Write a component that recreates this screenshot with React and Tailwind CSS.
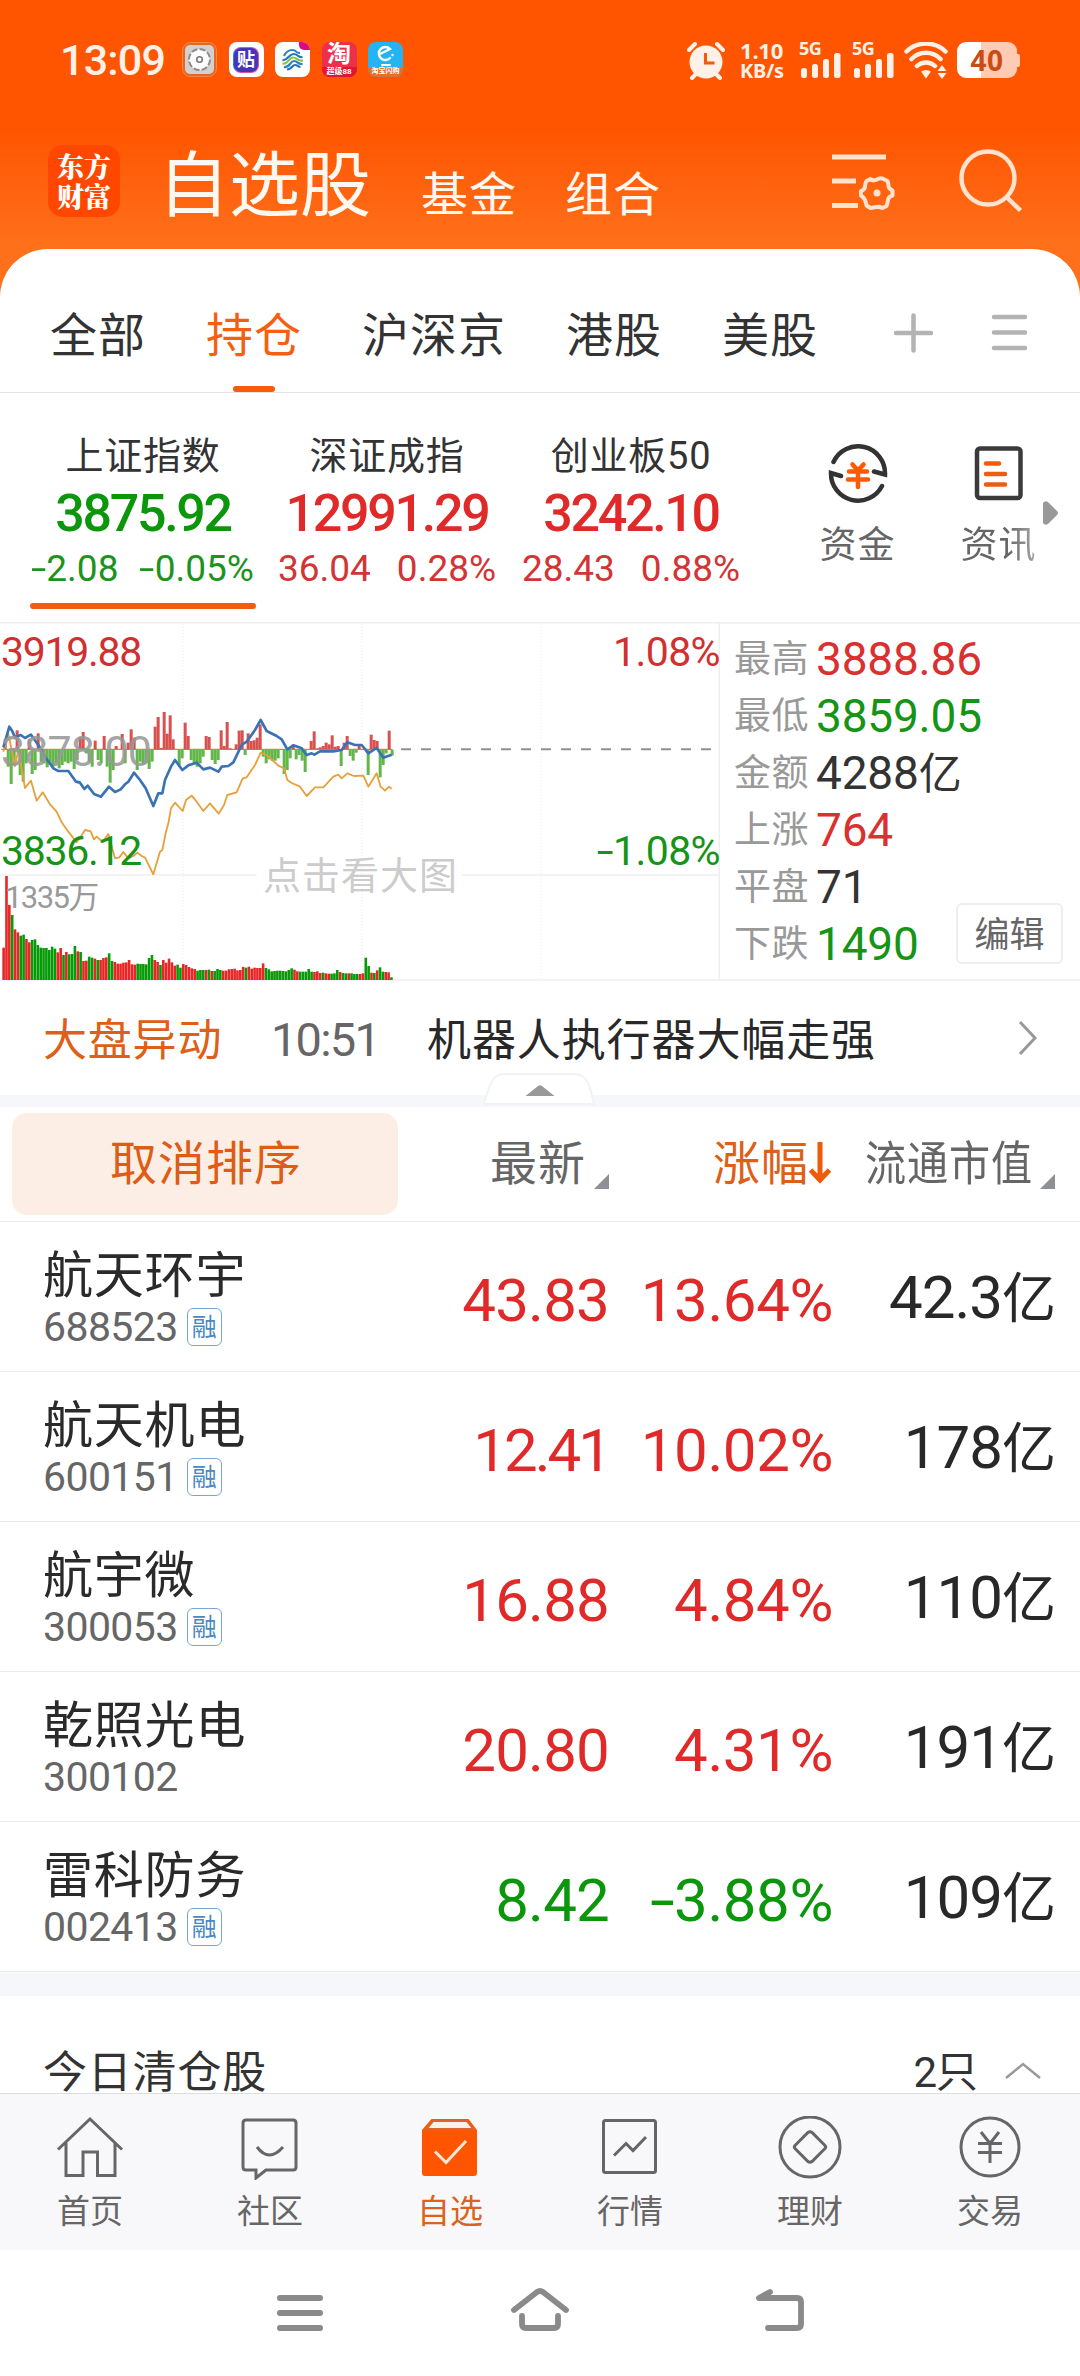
import { clsx } from "clsx";

const tabs = ["全部", "持仓", "沪深京", "港股", "美股"];

const indices = [
    { name: "上证指数", value: "3875.92", change: "-2.08", percent: "-0.05%", up: false, active: true },
    { name: "深证成指", value: "12991.29", change: "36.04", percent: "0.28%", up: true },
    { name: "创业板50", value: "3242.10", change: "28.43", percent: "0.88%", up: true },
];

const stats = [
    { label: "最高", value: "3888.86", color: "text-[#d93030]" },
    { label: "最低", value: "3859.05", color: "text-[#159415]" },
    { label: "金额", value: "4288亿", color: "text-[#333]" },
    { label: "上涨", value: "764", color: "text-[#d93030]" },
    { label: "平盘", value: "71", color: "text-[#333]" },
    { label: "下跌", value: "1490", color: "text-[#159415]" },
];

const stocks = [
    { name: "航天环宇", code: "688523", margin: true, price: "43.83", percent: "13.64%", cap: "42.3", up: true },
    { name: "航天机电", code: "600151", margin: true, price: "12.41", percent: "10.02%", cap: "178", up: true, tight: true },
    { name: "航宇微", code: "300053", margin: true, price: "16.88", percent: "4.84%", cap: "110", up: true },
    { name: "乾照光电", code: "300102", margin: false, price: "20.80", percent: "4.31%", cap: "191", up: true },
    { name: "雷科防务", code: "002413", margin: true, price: "8.42", percent: "-3.88%", cap: "109", up: false },
];

// [x, height], positive is above the zero line
const momentum = [
    [16, 30], [25, -50], [34, -102], [43, -45], [52, 57], [61, -75], [70, -95], [79, -40], [88, 30], [97, -72], [106, -60],
    [115, 48], [124, -35], [133, -40], [142, -52], [151, -45], [160, -50], [169, -40], [178, -55], [187, -45], [196, -35],
    [205, -40], [214, -35], [223, -57], [232, -30], [241, 38], [250, 52], [259, -10], [268, -35], [277, -50], [286, 26],
    [295, -30], [304, -40], [313, 40], [322, -50], [331, -98], [340, -60], [349, 10], [367, 46], [376, -40], [385, 20],
    [394, 60], [403, 35], [412, -60], [421, -35], [430, -45], [439, -40], [448, -57], [457, -35], [466, 68], [475, 97],
    [484, 4], [493, 112], [502, 47], [511, 102], [520, 30], [538, -45], [547, -25], [556, 80], [565, 40], [574, -30],
    [583, -40], [592, -50], [601, -40], [610, -20], [619, 40], [628, 37], [637, -30], [646, -42], [655, -30], [664, 57],
    [673, 10], [682, 82], [691, 3], [709, 15], [718, 56], [727, 57], [736, -15], [745, 48], [754, 25], [763, 27],
    [772, 35], [781, 75], [790, -20], [799, -40], [808, -28], [817, -32], [826, -32], [835, -25], [853, -72], [862, -60],
    [871, -25], [880, 14], [889, -28], [898, -15], [907, -32], [916, -66], [934, 25], [943, 54], [952, 3], [961, 6],
    [970, 10], [979, 20], [988, 15], [997, 42], [1006, 8], [1015, 10], [1024, -48], [1033, 20], [1042, 40], [1051, -18],
    [1060, -32], [1069, -8], [1078, 15], [1105, -75], [1114, 44], [1123, 28], [1132, 25], [1141, -82], [1150, -45],
    [1159, -10], [1168, 56], [1177, -17],
];

const volume = (
    "r97 r312 r225 g195 r152 r143 g133 g136 r123 r113 g120 g122 g105 g97 g96 g96 g90 g100 g94 r83 r96 g75 r84 g77 g78 g102 r86 g84 r57 r58 g70 g67 r64 g60 r60 r66 r68 g80 " +
    "g57 r54 r49 r49 r52 r53 r60 r47 r46 g49 g48 g48 g47 g66 g75 r60 r54 g45 r60 r52 r64 r53 r43 g46 g37 r48 r45 r39 r35 r33 g28 g30 g30 r30 g31 " +
    "r27 g27 g33 g30 r28 r28 r32 r33 r34 r29 r30 r39 g37 r40 r34 r37 r36 r36 r50 g36 g32 g26 g27 g28 g28 g27 g26 g30 g35 r31 r26 " +
    "g25 g25 g25 g33 g25 r24 r26 r21 g22 r20 r19 g19 g20 g30 r24 g21 g20 r20 g20 g18 g18 r18 r20 g67 g42 r22 g21 r29 g38 g25 r24 r23 g8"
).split(" ");

const volumeStep = 1172 / volume.length;

const avgLine =
    "10,412 28,350 36,362 45,382 62,375 75,384 93,374 115,405 135,440 160,475 175,483 205,483 228,515 240,518 253,537 263,527 282,552 303,560 327,530 345,546 362,538 375,523 385,515 402,488 420,510 437,535 460,588 475,550 487,550 495,510 513,470 525,450 547,480 565,466 590,458 610,478 630,473 655,485 665,470 685,468 700,457 725,405 740,395 765,360 782,330 800,363 830,378 845,388 862,418 880,406 905,415 920,435 935,430 943,434 960,424 1000,424 1025,420 1042,397 1065,405 1085,405 1105,430 1130,414 1150,443 1175,434";
const priceLine =
    "10,425 25,372 45,468 55,420 75,534 93,512 110,572 128,547 150,583 170,605 185,637 205,665 230,697 242,680 255,660 272,664 282,688 290,680 308,696 325,672 345,745 358,742 370,726 385,745 400,738 412,728 425,738 435,743 460,793 480,725 487,720 498,665 505,640 513,595 525,578 548,603 558,570 575,557 590,575 610,603 630,580 656,611 672,585 682,555 710,547 728,505 740,502 765,465 782,428 800,435 835,467 852,475 862,510 875,519 900,530 920,558 945,532 970,532 1000,500 1015,494 1025,505 1042,490 1062,498 1090,497 1105,530 1130,490 1142,530 1155,542 1167,530 1175,536";

const upColor = "text-[#e02a2a]";
const downColor = "text-[#0b960b]";

// Signed number with a wider minus sign than the font's own hyphen
const Signed = ({ value }) =>
    value.startsWith("-") ? (
        <>
            <span className="inline-block origin-right scale-x-[1.5]">-</span>
            {value.slice(1)}
        </>
    ) : (
        value
    );

const SignalBars = () => (
    <div className="flex h-[36px] w-[43px] flex-col">
        <span className="h-[13px] font-['Noto_Sans'] text-[18px] leading-[13px] font-bold tracking-[-0.5px]">5G</span>
        <svg width="43" height="26" className="-mt-[3px]" fill="currentColor">
            <rect x="2" y="16" width="6" height="10" rx="2.5" />
            <rect x="13" y="12" width="6" height="14" rx="2.5" />
            <rect x="24" y="7" width="6" height="19" rx="2.5" />
            <rect x="35" y="1" width="6.5" height="25" rx="2.5" />
        </svg>
    </div>
);

const AppIcons = () => (
    <div className="ml-[18px] flex gap-[11.5px]">
        <svg width="35" height="35" viewBox="0 0 35 35">
            <rect x="0.5" y="0.5" width="34" height="34" rx="8" fill="#e8661f" stroke="#f28a4c" />
            <rect x="3" y="3" width="29" height="29" rx="5" fill="#d3d1d0" />
            <circle cx="17.5" cy="17.5" r="10.5" fill="#fff" stroke="#8c8c8c" strokeWidth="2" strokeDasharray="6 2.2" />
            <circle cx="17.5" cy="17.5" r="2.8" fill="none" stroke="#777" strokeWidth="1.6" />
        </svg>
        <div className="flex size-[35px] items-center justify-center rounded-[8px] bg-white">
            <div className="flex size-[26px] items-center justify-center rounded-[8px] border border-[#e052a8] border-l-[#3a7bff] bg-[#4536b4] text-[18px] leading-none font-bold text-white">贴</div>
        </div>
        <svg width="35" height="35" viewBox="0 0 35 35">
            <rect width="35" height="35" rx="8" fill="#fff" />
            <path d="M24 0h3a8 8 0 0 1 8 8h-6a5 5 0 0 1-5-5z" fill="#e0087c" />
            <g fill="none" strokeWidth="2.2">
                <path d="M9 14q3-6 8-6 3 0 4 1.500t4 1.500" stroke="#2a84c6" />
                <path d="M7.500 18c5 1 6-6 11-6s4 4 9 3" stroke="#1f78bd" />
                <path d="M7.500 21.500c6 1 6-6 10.500-6s4 4 10 3" stroke="#8cc63f" />
                <path d="M9 25c6 1 6-6 10-6s3 3.500 8.500 3" stroke="#2a84c6" />
                <path d="M12 27.500c5 0 5-4.500 8-4.500s3 2 5.500 2" stroke="#1f78bd" />
            </g>
        </svg>
        <div className="flex size-[35px] flex-col items-center overflow-hidden rounded-[8px] bg-[#ee2f4c] text-white">
            <span className="h-[25px] text-[24px] leading-[25px] font-bold">淘</span>
            <span className="h-[10px] w-full bg-[#e3142f] text-center text-[8px] leading-[9px] font-bold">超级88</span>
        </div>
        <div className="flex size-[35px] flex-col items-center overflow-hidden rounded-[8px] bg-[#25b4f2] text-white">
            <svg width="35" height="25" viewBox="0 0 35 25" fill="none" stroke="#fff" strokeWidth="2.4" strokeLinecap="round">
                <path d="M12 12l10-5a6.500 6.500 0 1 0 0 9M24.500 13v.1" />
                <path d="M14 23h8" strokeWidth="2" />
            </svg>
            <span className="h-[10px] w-full bg-[#e2702f] text-center text-[7px] leading-[9px] font-bold">淘宝闪购</span>
        </div>
    </div>
);

const StatusBar = () => (
    <div className="flex h-[120px] items-start pt-[42px] pr-[60px] pl-[60px] text-[#fff0e8]">
        <span className="w-[104px] text-[43px] leading-[36px] font-medium tracking-[-0.8px]">13:09</span>
        <AppIcons />
        <div className="ml-auto flex items-start">
            <svg width="38" height="38" viewBox="0 0 38 38" fill="currentColor">
                <circle cx="19" cy="20" r="16.500" />
                <path d="M2 8l6-6M36 8l-6-6M9 32l-4 4M29 32l4 4" stroke="currentColor" strokeWidth="4" strokeLinecap="round" />
                <path d="M18.500 11v10h9" fill="none" stroke="#f2590c" strokeWidth="3" />
            </svg>
            <div className="ml-[15px] flex w-[44px] flex-col font-['Noto_Sans'] text-[22px] font-bold">
                <span className="h-[18px] leading-[17px] tracking-[-0.2px]">1.10</span>
                <span className="h-[18px] text-[20px] leading-[21px] tracking-[-0.3px]">KB/s</span>
            </div>
            <div className="ml-[15px] flex gap-[10px]">
                <SignalBars />
                <SignalBars />
            </div>
            <svg width="44" height="37" viewBox="0 0 44 37" className="ml-[9px]" fill="none" stroke="currentColor" strokeWidth="4.500" strokeLinecap="round">
                <path d="M2.500 9.500a28 28 0 0 1 39 0M7.500 17a20 20 0 0 1 29 0M13 24a13 13 0 0 1 18 0" />
                <path d="M17 29.500q5-3 10 0l-5 7z" fill="currentColor" stroke="none" />
                <path d="M33.500 29l4.500-6 4.500 6zM33.500 31l4.500 6 4.500-6z" fill="currentColor" stroke="none" />
            </svg>
            <div className="ml-[9px] flex items-center">
                <div className="flex h-[36px] w-[60px] items-center justify-center rounded-[9px] bg-linear-to-r from-white from-40% to-[#ffcbb3] to-40% font-['Noto_Sans'] text-[28px] leading-none font-bold tracking-[0.5px] text-[#cb4b14]">40</div>
                <span className="h-[13px] w-[3px] rounded-r-[2px] bg-[#ffcbb3]"></span>
            </div>
        </div>
    </div>
);

const Header = () => (
    <div className="flex h-[129px] items-start text-[#fff8f0]">
        <div className="mt-[25px] ml-[48px] flex size-[72px] flex-col items-center justify-center rounded-[15px] bg-[#ff4700] font-['Noto_Serif_CJK_SC','Noto_Sans_CJK_SC',serif] text-[27px] leading-[30px] font-black text-white">
            <span>东方</span>
            <span>财富</span>
        </div>
        <span className="mt-[26px] ml-[38px] w-[221px] text-[71px] leading-[80px] whitespace-nowrap">自选股</span>
        <span className="mt-[45px] ml-[42px] w-[102px] text-[47px] leading-[60px] tracking-[1px]">基金</span>
        <span className="mt-[45px] ml-[42px] w-[102px] text-[47px] leading-[60px] tracking-[1px]">组合</span>
        <svg width="64" height="60" viewBox="0 0 64 60" className="mt-[31px] ml-[165px]" fill="none" stroke="#ffe3cf" strokeWidth="5">
            <path d="M0 6h54M0 30h24M0 54.500h26" />
            <g strokeWidth="4" strokeLinejoin="round">
                <path d="M38.500 28q2.500 2.500 6.500.5t6.500-.5l4 2q1 2.500 1 5t4 4.500v5q-4 1-4.500 4.500t-1.500 6l-4 2q-3-1.500-6-1t-6 1l-4-2.500q-.5-3-1.500-5.500t-4-4.500v-4.500q4-1.500 4-4.500t1.500-5.500z" />
                <circle cx="45" cy="42" r="3.500" fill="#ffe3cf" stroke="none" />
            </g>
        </svg>
        <svg width="66" height="66" viewBox="0 0 66 66" className="mt-[27px] ml-[62px]" fill="none" stroke="#ffe3cf" strokeWidth="4.500">
            <circle cx="30" cy="31" r="26.500" />
            <path d="M48.500 50l14 13.500" />
        </svg>
    </div>
);

const Tabs = () => (
    <div className="flex h-[144px] items-start border-b border-[#e4e4e4] pl-[50px]">
        <div className="flex gap-[60px]">
            {tabs.map((tab) => (
                <div key={tab} className={clsx("flex flex-col items-center", tab === "持仓" ? "text-[#f55f12]" : "text-[#333]")}>
                    <span className="mt-[57px] text-[47px] leading-[60px] tracking-[1px] whitespace-nowrap">{tab}</span>
                    {tab === "持仓" && <span className="mt-[20px] h-[6px] w-[42px] rounded-full bg-[#fa5a0a]"></span>}
                </div>
            ))}
        </div>
        <svg width="40" height="40" viewBox="0 0 40 40" className="mt-[64px] ml-[75px]" stroke="#b3b3b3" strokeWidth="4.500" strokeLinecap="round">
            <path d="M3 20h35M20.500 2.500v35" />
        </svg>
        <svg width="38" height="40" viewBox="0 0 38 40" className="mt-[64px] ml-[58px]" stroke="#b3b3b3" strokeWidth="4.500" strokeLinecap="round">
            <path d="M3 4h31M3 19.500h31M3 35h31" />
        </svg>
    </div>
);

const IndexBar = () => (
    <div className="flex h-[229px] pl-[21px]">
        {indices.map((item) => (
            <div key={item.name} className="flex w-[244px] shrink-0 flex-col items-center pt-[38px]">
                <span className="text-[38px] leading-[50px] tracking-[0.8px] text-[#333]">{item.name}</span>
                <span className={clsx("mt-[7px] text-[52px] leading-[52px] font-medium tracking-[-2.3px]", item.up ? upColor : downColor)}>{item.value}</span>
                <div className={clsx("mt-[9px] flex gap-[26px] text-[37px] leading-[40px] whitespace-nowrap", item.up ? "text-[#d13535]" : "pl-[4px] text-[#1c931c]")}>
                    <span><Signed value={item.change} /></span>
                    <span><Signed value={item.percent} /></span>
                </div>
                {item.active && <span className="mt-[14px] h-[6px] w-[226px] rounded-full bg-[#f05c10]"></span>}
            </div>
        ))}
        <div className="ml-[34px] flex w-[141px] shrink-0 flex-col items-center pt-[51px] text-[#666]">
            <svg width="60" height="60" viewBox="0 0 60 60" fill="none" stroke="#333" strokeWidth="4.500" strokeLinecap="round">
                <path d="M5.500 18A27 27 0 0 1 57 30.500l-11-3" />
                <path d="M54 42A27 27 0 0 1 3 29l10 3" />
                <path d="M24.500 20.500l5.500 6 5.500-6M21 27.500h18M20 35.500h20M30 27v16" stroke="#ff5a00" />
            </svg>
            <span className="mt-[17px] text-[37px] leading-[50px] tracking-[1px]">资金</span>
        </div>
        <div className="flex w-[141px] shrink-0 flex-col items-center pt-[51px] text-[#777]">
            <svg width="60" height="60" viewBox="0 0 60 60" fill="none" stroke="#3a3a3a" strokeWidth="4.500" strokeLinecap="round">
                <rect x="8" y="4.500" width="43.500" height="49.500" rx="3" />
                <path d="M17 19.500h13M17 30h19M17 40.500h19" stroke="#ee5c12" />
            </svg>
            <span className="mt-[17px] bg-linear-to-r from-[#666] from-60% to-[#aaa] bg-clip-text text-[37px] leading-[50px] tracking-[1px] text-transparent">资讯</span>
        </div>
        <svg width="16" height="26" viewBox="0 0 16 26" className="mt-[107px] -ml-[26px] shrink-0">
            <path d="M0 3q2-3 5-1l9 9q2 2 0 4l-9 9q-3 2-5-1z" fill="#999" />
        </svg>
    </div>
);

const IntradayChart = () => (
    <div className="relative h-[359px] w-[720px] text-[41px] leading-[40px] tracking-[-1.3px]">
        <svg width="720" height="359" viewBox="0 36 2160 1077">
            <path d="M0 38h2160M0 795h770M1385 795h775M0 1110h2160M2158 38v1075" stroke="#efefef" strokeWidth="5" />
            <path d="M549 42v1068M1086 42v1068M1623 42v1068" stroke="#ececec" strokeWidth="3" strokeDasharray="3 6" />
            <path d="M1203 418h940" stroke="#909090" strokeWidth="6" strokeDasharray="30 30" />
            <path d="M4 418h1174" stroke="#b98f5c" strokeWidth="4" />
            {momentum.map(([x, h]) => (
                <rect key={x} x={x - 5} y={h > 0 ? 418 - h : 420} width="9" height={Math.abs(h)} fill={h > 0 ? "#d8504f" : "#62b64a"} />
            ))}
            {volume.map((v, i) => {
                const h = Number(v.slice(1));
                return <rect key={i} x={7 + i * volumeStep} y={1110 - h} width="7.800" height={h} fill={v[0] === "r" ? "#e82626" : "#069a06"} />;
            })}
        </svg>
        <svg width="720" height="359" viewBox="0 36 2160 1077" className="absolute top-0 left-0" fill="none" strokeLinejoin="round">
            <polyline points={priceLine} stroke="#e6a13c" strokeWidth="5.500" />
            <polyline points={avgLine} stroke="#3a72b5" strokeWidth="8" />
        </svg>
        <span className="absolute top-[109px] left-px text-[43px] tracking-[-0.9px] text-[#999]/90">3878.00</span>
        <span className="absolute top-[10px] left-px text-[#d13030]">3919.88</span>
        <span className="absolute top-[209px] left-px text-[#159415]">3836.12</span>
        <span className="absolute top-[10px] right-0 tracking-[-0.6px] text-[#d13030]">1.08%</span>
        <span className="absolute top-[209px] right-0 tracking-[-0.6px] text-[#159415]"><Signed value="-1.08%" /></span>
        <span className="absolute top-[234px] left-[263px] text-[38px] tracking-[1px] whitespace-nowrap text-[#ccc]">点击看大图</span>
        <span className="absolute top-[256px] left-[5px] text-[31px] tracking-[-1.6px] text-[#999]">1335万</span>
    </div>
);

const StatsPanel = () => (
    <div className="relative flex flex-1 flex-col border-t-2 border-b-2 border-[#f2f2f2] pt-[6px] pl-[14px]">
        {stats.map((s) => (
            <div key={s.label} className="flex h-[57px] shrink-0 items-center">
                <span className="w-[82px] pt-[2px] text-[37px] leading-none tracking-[0.5px] text-[#999]">{s.label}</span>
                <span className={clsx("text-[46px] leading-none tracking-[-0.2px]", s.color)}>
                    {s.value.replace("亿", "")}
                    {s.value.includes("亿") && <span className="text-[43px]">亿</span>}
                </span>
            </div>
        ))}
        <button className="absolute right-[17px] bottom-[15px] h-[61px] w-[107px] rounded-[6px] border-2 border-[#eee] bg-white pt-[3px] text-[35px] leading-none text-[#666]">编辑</button>
    </div>
);

const NewsRow = () => (
    <div className="relative flex h-[114px] shrink-0 items-center pl-[43px]">
        <span className="w-[228px] pt-[5px] text-[44px] leading-none tracking-[0.8px] text-[#dd5f18]">大盘异动</span>
        <span className="w-[156px] pt-[3px] text-[47px] leading-none tracking-[-1.8px] text-[#666]">10:51</span>
        <span className="pt-[5px] text-[44px] leading-none tracking-[0.9px] text-[#282828]">机器人执行器大幅走强</span>
        <svg width="20" height="36" viewBox="0 0 20 36" className="mr-[42px] ml-auto" fill="none" stroke="#999" strokeWidth="3">
            <path d="M2 2l15 16L2 34" />
        </svg>
        <svg width="114" height="34" viewBox="0 0 114 34" className="absolute top-[91px] left-[483px] z-10">
            <path d="M1 32q4-14 7-21 4-9 13-9h70q10 0 14 9 3 7 6 21z" fill="#fff" stroke="#f1f2f4" strokeWidth="2" />
            <path d="M42.500 24L55 14q2-1.500 4 0l12.500 10z" fill="#999" />
        </svg>
    </div>
);

const Corner = () => (
    <svg width="15" height="15" viewBox="0 0 15 15" className="mt-[67px] shrink-0">
        <path d="M15 0v15H0z" fill="#8f8f96" />
    </svg>
);

const TableHeader = () => (
    <div className="flex h-[115px] shrink-0 border-b border-[#ebebeb] text-[47px] leading-[60px] tracking-[1px] whitespace-nowrap text-[#666]">
        <div className="mt-[6px] ml-[12px] flex h-[102px] w-[386px] shrink-0 justify-center rounded-[15px] bg-[#fdeee5] pt-[21px] pl-[2px] text-[#de5c14]">取消排序</div>
        <span className="mt-[27px] ml-[92px] w-[104px]">最新</span>
        <Corner />
        <span className="mt-[27px] ml-[104px] w-[96px] text-[#dd5f18]">涨幅</span>
        <svg width="22" height="42" viewBox="0 0 22 42" className="mt-[35px] shrink-0" fill="none" stroke="#ee5a08" strokeWidth="5">
            <path d="M11 0v36M1.500 28l9.500 10 9.500-10" />
        </svg>
        <span className="mt-[27px] ml-[34px] w-[175px] origin-left scale-x-[0.875]">流通市值</span>
        <Corner />
    </div>
);

const StockRow = ({ stock }) => (
    <div className="flex h-[150px] shrink-0 items-start border-b border-[#ebebeb]">
        <div className="flex w-[300px] flex-col pt-[24px] pl-[43px]">
            <span className="text-[50px] leading-[60px] tracking-[0.8px] text-[#2a2a2a]">{stock.name}</span>
            <div className="mt-px flex items-center gap-[9px] text-[#666]">
                <span className="text-[41px] leading-[40px] tracking-[-0.6px]">{stock.code}</span>
                {stock.margin && (
                    <span className="flex h-[38px] w-[35px] items-center justify-center rounded-[6px] border-[1.5px] border-[#78a6d4] text-[25px] leading-none text-[#4a88c4]">融</span>
                )}
            </div>
        </div>
        <span className={clsx("mt-[49px] w-[309px] text-right text-[60px] leading-[60px]", stock.tight ? "tracking-[-3px]" : "tracking-[-0.8px]", stock.up ? upColor : downColor)}>{stock.price}</span>
        <span className={clsx("mt-[49px] w-[224px] text-right text-[60px] leading-[60px] tracking-[-0.4px]", stock.up ? upColor : downColor)}>
            <Signed value={stock.percent} />
        </span>
        <span className="mt-[46px] w-[222px] text-right text-[60px] leading-[60px] tracking-[-1px] text-[#282828]">
            {stock.cap}
            <span className="text-[54px]">亿</span>
        </span>
    </div>
);

const navItems = [
    {
        label: "首页",
        icon: <path d="M2 33.500L34 3l32 30.500M10 27v32.500h17V36h14.500v23.500H59V27" />,
    },
    {
        label: "社区",
        icon: (
            <>
                <path d="M10 4h47q3 0 3 3v44q0 3-3 3H30l-10 8v-8H10q-3 0-3-3V7q0-3 3-3z" />
                <path d="M21 31q12 16 26 0" />
            </>
        ),
    },
    {
        label: "自选",
        active: true,
        icon: (
            <>
                <path d="M6 14L15.500 3h37L61 14v43q0 3-3 3H9q-3 0-3-3z" fill="#ff5500" stroke="none" />
                <path d="M10.500 13l6.500-8h34l6.500 8z" fill="#fdf0e8" stroke="#d9662c" strokeWidth="2" />
                <path d="M19 35.500l11 11L50 25" stroke="#ffe6d6" />
            </>
        ),
    },
    {
        label: "行情",
        icon: (
            <>
                <rect x="7.500" y="4.500" width="52" height="52" rx="2" />
                <path d="M18 39.500l12-12 7 7L50 21" />
            </>
        ),
    },
    {
        label: "理财",
        icon: (
            <>
                <circle cx="34" cy="31" r="30" />
                <path d="M32 16.500q2-1.500 4 0l13 13q1.500 1.500 0 3l-13 13q-2 1.500-4 0l-13-13q-1.500-1.500 0-3z" />
            </>
        ),
    },
    {
        label: "交易",
        icon: (
            <>
                <circle cx="34" cy="31" r="29" />
                <path d="M25 16l9 11.500L43 16M22 27.500h24M22 36.500h24M34 27v20" />
            </>
        ),
    },
];

const BottomNav = () => (
    <div className="flex h-[157px] shrink-0 border-t border-[#dedede] bg-[#f8f8fa]">
        {navItems.map((item) => (
            <div key={item.label} className={clsx("flex w-[180px] flex-col items-center pt-[22px]", item.active ? "text-[#d9641f]" : "text-[#666]")}>
                <svg width="68" height="64" viewBox="0 0 68 64" fill="none" stroke="currentColor" strokeWidth="3">
                    {item.icon}
                </svg>
                <span className="mt-[12px] text-[33px] leading-[40px]">{item.label}</span>
            </div>
        ))}
    </div>
);

const SystemNav = () => (
    <div className="flex h-[126px] shrink-0 items-start bg-white pt-[36px]">
        <svg width="48" height="48" viewBox="0 0 48 48" className="ml-[276px]" stroke="#8a8a8a" strokeWidth="6" strokeLinecap="round">
            <path d="M4 12h40M4 27h40M4 42h40" />
        </svg>
        <svg width="60" height="48" viewBox="0 0 60 48" className="ml-[186px]" fill="none" stroke="#8a8a8a" strokeWidth="5.800" strokeLinecap="round">
            <path d="M4 24L27 6q3-2 6 0l23 18M12 30v8q0 4 4 4h28q4 0 4-4v-8" />
        </svg>
        <svg width="52" height="48" viewBox="0 0 52 48" className="ml-[184px]" fill="none" stroke="#8a8a8a" strokeWidth="5.800" strokeLinecap="round" strokeLinejoin="round">
            <path d="M16 6L5 12h38q4 0 4 4v22q0 4-4 4H14" />
        </svg>
    </div>
);

const App = () => {
    return (
        <div lang="zh-CN" className="flex h-[2376px] w-[1080px] flex-col overflow-hidden bg-linear-to-b from-[#ff5500] from-[130px] to-[#ff701a] to-[250px] font-[Roboto,'Noto_Sans_CJK_SC',sans-serif]">
            <StatusBar />
            <Header />
            <div className="flex h-[1844px] shrink-0 flex-col overflow-hidden rounded-t-[48px] bg-white">
                <Tabs />
                <IndexBar />
                <div className="flex h-[359px] shrink-0">
                    <IntradayChart />
                    <StatsPanel />
                </div>
                <NewsRow />
                <div className="h-[12px] shrink-0 bg-[#f6f7fa]"></div>
                <TableHeader />
                {stocks.map((stock) => (
                    <StockRow key={stock.code} stock={stock} />
                ))}
                <div className="h-[24px] shrink-0 bg-[#f6f7fa]"></div>
                <div className="flex h-[97px] shrink-0 items-start pt-[47px] pr-[39px] pl-[43px] leading-[60px] text-[#333]">
                    <span className="text-[44px] tracking-[0.8px]">今日清仓股</span>
                    <span className="ml-auto text-[42px] tracking-[-1px]">2只</span>
                    <svg width="36" height="18" viewBox="0 0 36 18" className="mt-[19px] ml-[28px]" fill="none" stroke="#999" strokeWidth="2.500">
                        <path d="M1 16L18 2l17 14" />
                    </svg>
                </div>
            </div>
            <BottomNav />
            <SystemNav />
        </div>
    );
};

export default App;
